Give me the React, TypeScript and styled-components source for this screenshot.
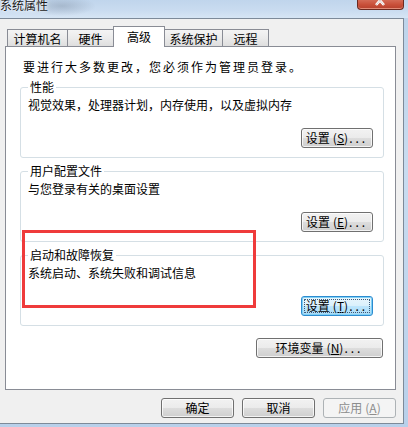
import React from 'react';
import styled, { createGlobalStyle, css } from 'styled-components';

const Global = createGlobalStyle`
  html, body { margin: 0; padding: 0; background: #fff; }
  body {
    font-family: "Noto Sans CJK SC", "Noto Sans", sans-serif;
    font-size: 12px;
    color: #000;
  }
  * { box-sizing: border-box; }
`;

const Window = styled.div`
  position: relative;
  width: 408px;
  height: 427px;
  display: flex;
  flex-direction: column;
  overflow: hidden;
  background: linear-gradient(180deg, #bcd3ea 0%, #c8dcf0 40%, #b8d0ea 100%);
`;

const TitleBar = styled.div`
  height: 18px;
  flex: none;
  display: flex;
  justify-content: space-between;
  align-items: flex-start;
  background:
    radial-gradient(ellipse 34px 10px at 62px 6px, rgba(110, 125, 145, 0.35), transparent),
    linear-gradient(180deg, #c0d5ec 0%, #cadcf0 60%, #d6e5f4 100%);
`;

const Title = styled.div`
  font-size: 12px;
  line-height: 12px;
  margin-top: -1px;
  color: #1a1a1a;
  text-shadow: 0 0 5px rgba(255, 255, 255, 0.95), 0 0 2px rgba(255, 255, 255, 0.9);
`;

const CloseButton = styled.div`
  width: 47px;
  height: 10px;
  margin-right: 4px;
  border: 1px solid #6b2a20;
  border-top: none;
  border-radius: 0 0 4px 4px;
  background: linear-gradient(180deg, #d46a55 0%, #c9503a 50%, #b5402c 100%);
  box-shadow: inset 0 -1px 0 rgba(255, 190, 170, 0.6);
  display: flex;
  justify-content: center;
  overflow: hidden;
`;

const Body = styled.div`
  flex: 1;
  margin: 0 4px 3px 0;
  border: 1px solid #7d8a99;
  border-left: none;
  background: #f0f0f0;
  display: flex;
  flex-direction: column;
  padding: 7px 7px 0 5px;
`;

const TabRow = styled.div`
  height: 21px;
  margin-bottom: -1px;
  padding-left: 2px;
  display: flex;
  align-items: flex-end;
  position: relative;
  z-index: 1;
`;

const Tab = styled.div<{ $active?: boolean; $w: number }>`
  width: ${(p) => p.$w}px;
  margin-left: -1px;
  border: 1px solid #898c95;
  border-bottom: none;
  text-align: center;
  font-size: 12px;
  line-height: 14px;
  white-space: nowrap;
  &:first-child { margin-left: 0; }
  ${(p) =>
    p.$active
      ? css`
          height: 21px;
          padding-top: 3px;
          background: #fff;
          position: relative;
          z-index: 2;
        `
      : css`
          height: 17px;
          margin-bottom: 1px;
          padding-top: 2px;
          background: linear-gradient(180deg, #f4f4f4 0%, #ebebeb 50%, #dedede 100%);
        `}
`;

const Panel = styled.div`
  height: 344px;
  flex: none;
  border: 1px solid #898c95;
  background: #fff;
  padding: 13px 11px 0 14px;
  display: flex;
  flex-direction: column;
`;

const Intro = styled.div`
  line-height: 14px;
  margin-left: 3px;
  letter-spacing: 2px;
`;

const Group = styled.fieldset`
  margin: 6px 0 0 0;
  border: 1px solid #d5dfe5;
  border-radius: 3px;
  padding: 4px 10px 9px 7px;
  min-width: 0;
  display: flex;
  flex-direction: column;
`;

const Legend = styled.legend`
  padding: 0 2px;
  margin-left: 0;
  font-size: 12px;
  line-height: 14px;
`;

const Desc = styled.div`
  line-height: 14px;
`;

const ButtonRow = styled.div<{ $top: number }>`
  display: flex;
  justify-content: flex-end;
  gap: 8px;
  margin-top: ${(p) => p.$top}px;
`;

type Variant = 'normal' | 'hot' | 'disabled';

const Button = styled.div<{ $variant?: Variant; $w: number }>`
  position: relative;
  width: ${(p) => p.$w}px;
  height: 20px;
  border: 1px solid #707070;
  border-radius: 3px;
  background: linear-gradient(180deg, #f2f2f2 0%, #ebebeb 50%, #dddddd 50%, #cfcfcf 100%);
  box-shadow: inset 0 0 0 1px rgba(255, 255, 255, 0.75);
  display: flex;
  align-items: center;
  justify-content: center;
  font-size: 12px;
  line-height: 14px;
  white-space: nowrap;
  color: #000;
  ${(p) =>
    p.$variant === 'hot' &&
    css`
      border-color: #2c8bd0;
      background: linear-gradient(180deg, #eaf6fd 0%, #d9f0fc 50%, #bee6fd 50%, #a7d9f5 100%);
      box-shadow: inset 0 0 0 1px #7fd0f5;
      &::after {
        content: '';
        position: absolute;
        inset: 2px;
        border: 1px dotted #3a5a78;
        border-radius: 1px;
      }
    `}
  ${(p) =>
    p.$variant === 'disabled' &&
    css`
      border-color: #adb2b5;
      background: #f4f4f4;
      box-shadow: none;
      color: #8d8d8d;
    `}
`;

const Hotkey = styled.span`
  margin-left: 3px;
`;

const Dots = styled.span`
  letter-spacing: 3px;
  margin-left: 1px;
`;

const BottomRow = styled.div`
  display: flex;
  justify-content: flex-end;
  gap: 8px;
  margin-top: 8px;
`;

const Annotation = styled.div`
  position: absolute;
  left: 22px;
  top: 230px;
  width: 234px;
  height: 78px;
  border: 3px solid #ef3b3b;
  pointer-events: none;
`;

const Label: React.FC<{ text: string; hk: string; dots?: boolean }> = ({ text, hk, dots }) => (
  <>
    {text}
    <Hotkey>
      (<u>{hk}</u>)
    </Hotkey>
    {dots && <Dots>...</Dots>}
  </>
);

const tabs = [
  { t: '计算机名', w: 61 },
  { t: '硬件', w: 47 },
  { t: '高级', w: 52, active: true },
  { t: '系统保护', w: 59 },
  { t: '远程', w: 47 },
];

const groups = [
  { title: '性能', desc: '视觉效果，处理器计划，内存使用，以及虚拟内存', hk: 'S' },
  { title: '用户配置文件', desc: '与您登录有关的桌面设置', hk: 'E' },
  { title: '启动和故障恢复', desc: '系统启动、系统失败和调试信息', hk: 'T', hot: true },
];

export default function App() {
  return (
    <>
      <Global />
      <Window>
        <TitleBar>
          <Title>系统属性</Title>
          <CloseButton>
            <svg width="14" height="9" viewBox="0 0 14 9">
              <path d="M2 -4 L10 5 M10 -4 L2 5" stroke="#fff" strokeWidth="2.6" fill="none" />
              <path d="M2 -4 L10 5 M10 -4 L2 5" stroke="#5a2a22" strokeWidth="0.6" fill="none" opacity="0.4" />
            </svg>
          </CloseButton>
        </TitleBar>
        <Body>
          <TabRow>
            {tabs.map((tb) => (
              <Tab key={tb.t} $w={tb.w} $active={tb.active}>
                {tb.t}
              </Tab>
            ))}
          </TabRow>
          <Panel>
            <Intro>要进行大多数更改，您必须作为管理员登录。</Intro>
            {groups.map((g) => (
              <Group key={g.title}>
                <Legend>{g.title}</Legend>
                <Desc>{g.desc}</Desc>
                <ButtonRow $top={16}>
                  <Button $w={72} $variant={g.hot ? 'hot' : 'normal'}>
                    <Label text="设置" hk={g.hk} dots />
                  </Button>
                </ButtonRow>
              </Group>
            ))}
            <ButtonRow $top={12}>
              <Button $w={127} style={{ marginRight: 1 }}>
                <Label text="环境变量" hk="N" dots />
              </Button>
            </ButtonRow>
          </Panel>
          <BottomRow>
            <Button $w={73}>确定</Button>
            <Button $w={73}>取消</Button>
            <Button $w={73} $variant="disabled">
              <Label text="应用" hk="A" />
            </Button>
          </BottomRow>
        </Body>
        <Annotation />
      </Window>
    </>
  );
}
